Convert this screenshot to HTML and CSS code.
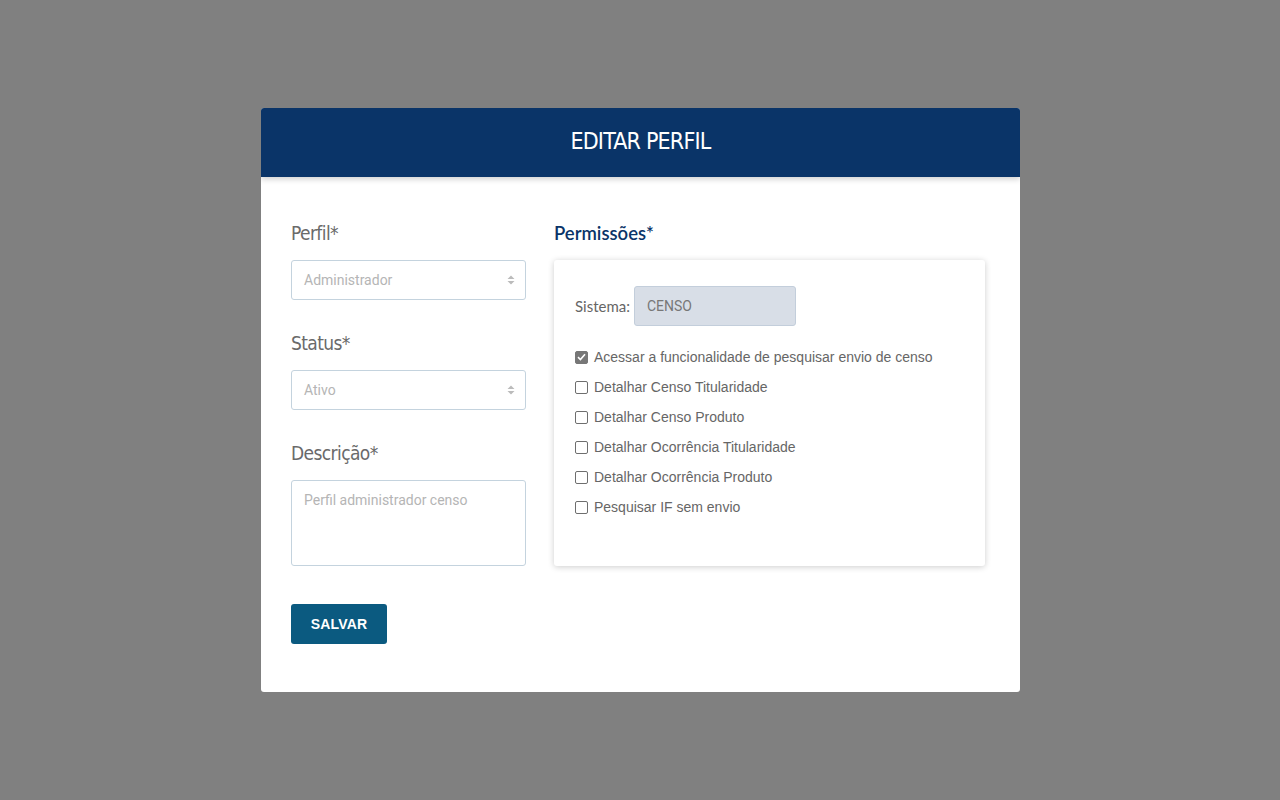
FILE: index.html
```html
<!DOCTYPE html>
<html lang="pt">
<head>
  <meta charset="UTF-8">
  <meta name="viewport" content="width=device-width, initial-scale=1.0">
  <title>Editar Perfil</title>
  <link rel="stylesheet" href="styles.css">
</head>
<body>
  <div class="card">
    <div class="card-header">
      <h1>EDITAR PERFIL</h1>
    </div>
    <div class="card-body">
      <div class="columns">
        <div class="col-left">
          <label class="field-label">Perfil*</label>
          <div class="select-box">
            <span class="placeholder">Administrador</span>
            <svg class="arrows" width="8" height="10" viewBox="0 0 8 10"><path d="M4 0.5 L7.5 4 L0.5 4 Z M4 9.5 L7.5 6 L0.5 6 Z" fill="#bbb"/></svg>
          </div>

          <label class="field-label spaced">Status*</label>
          <div class="select-box">
            <span class="placeholder">Ativo</span>
            <svg class="arrows" width="8" height="10" viewBox="0 0 8 10"><path d="M4 0.5 L7.5 4 L0.5 4 Z M4 9.5 L7.5 6 L0.5 6 Z" fill="#bbb"/></svg>
          </div>

          <label class="field-label spaced">Descrição*</label>
          <div class="text-box">
            <span class="placeholder">Perfil administrador censo</span>
          </div>
        </div>

        <div class="col-right">
          <label class="perm-label">Permissões*</label>
          <div class="perm-panel">
            <div class="sistema-row">
              <span class="sistema-label">Sistema:</span>
              <div class="sistema-input">CENSO</div>
            </div>
            <ul class="check-list">
              <li><span class="check checked"><svg width="9" height="8" viewBox="0 0 9 8"><path d="M1 4.2 L3.4 6.5 L8 1.2" stroke="#fff" stroke-width="1.6" fill="none"/></svg></span>Acessar a funcionalidade de pesquisar envio de censo</li>
              <li><span class="check"></span>Detalhar Censo Titularidade</li>
              <li><span class="check"></span>Detalhar Censo Produto</li>
              <li><span class="check"></span>Detalhar Ocorrência Titularidade</li>
              <li><span class="check"></span>Detalhar Ocorrência Produto</li>
              <li><span class="check"></span>Pesquisar IF sem envio</li>
            </ul>
          </div>
        </div>
      </div>
      <button class="btn-salvar">SALVAR</button>
    </div>
  </div>
</body>
</html>
```

FILE: styles.css
```css
* {
  box-sizing: border-box;
}

body {
  margin: 0;
  padding: 108px 0 0;
  background-color: #808080;
  font-family: "Liberation Sans", Arial, sans-serif;
  min-height: 800px;
}

.card {
  width: 759px;
  margin: 0 0 0 261px;
  background-color: #fff;
  border-radius: 3px;
  overflow: hidden;
}

.card-header {
  height: 69px;
  background-color: #0a3468;
  display: flex;
  align-items: center;
  justify-content: center;
  box-shadow: 0 2px 6px rgba(0, 0, 0, 0.2);
  position: relative;
}

.card-header h1 {
  margin: 0 0 4px;
  color: #fff;
  font-family: "DejaVu Sans", sans-serif;
  font-stretch: condensed;
  font-weight: 400;
  font-size: 23px;
  letter-spacing: -0.8px;
}

.card-body {
  padding: 44px 35px 48px 30px;
}

.columns {
  display: flex;
  gap: 28px;
}

.col-left {
  width: 235px;
  display: flex;
  flex-direction: column;
}

.col-right {
  flex: 1;
  display: flex;
  flex-direction: column;
}

.field-label {
  display: block;
  height: 24px;
  line-height: 24px;
  margin-bottom: 15px;
  font-family: "DejaVu Sans", sans-serif;
  font-stretch: condensed;
  font-size: 19px;
  letter-spacing: -0.6px;
  color: #6a6a6a;
}

.field-label.spaced {
  margin-top: 31px;
}

.select-box {
  height: 40px;
  border: 1px solid #c4d3de;
  border-radius: 3px;
  display: flex;
  align-items: center;
  justify-content: space-between;
  padding: 0 10px 0 12px;
}

.placeholder {
  font-family: Roboto, "Liberation Sans", sans-serif;
  font-size: 14px;
  color: #b5b5b5;
}

.text-box {
  height: 86px;
  border: 1px solid #c4d3de;
  border-radius: 3px;
  padding: 10px 12px;
}

.perm-label {
  display: block;
  height: 24px;
  line-height: 24px;
  margin-bottom: 15px;
  font-family: Lato, sans-serif;
  font-weight: 600;
  font-size: 18.5px;
  color: #0a3468;
}

.perm-panel {
  flex: 1;
  border-radius: 3px;
  box-shadow: 0 1px 6px rgba(0, 0, 0, 0.2);
  padding: 26px 21px 20px;
}

.sistema-row {
  display: flex;
  align-items: center;
  gap: 4px;
}

.sistema-label {
  font-family: Lato, sans-serif;
  font-size: 15px;
  color: #666;
}

.sistema-input {
  width: 162px;
  height: 40px;
  background-color: #d8dee7;
  border: 1px solid #c3cedb;
  border-radius: 3px;
  padding: 0 12px;
  line-height: 38px;
  font-family: Roboto, "Liberation Sans", sans-serif;
  font-size: 14px;
  color: #777;
}

.check-list {
  list-style: none;
  margin: 21px 0 0;
  padding: 0;
}

.check-list li {
  display: flex;
  align-items: center;
  height: 20px;
  margin-bottom: 10px;
  font-size: 14px;
  color: #666;
}

.check {
  width: 13px;
  height: 13px;
  border: 1.5px solid #6e6e6e;
  border-radius: 2px;
  margin-right: 6px;
  display: flex;
  align-items: center;
  justify-content: center;
}

.check.checked {
  background-color: #777;
  border-color: #777;
}

.btn-salvar {
  margin-top: 38px;
  width: 96px;
  height: 40px;
  background-color: #0b5a80;
  color: #fff;
  border: none;
  border-radius: 3px;
  font-family: "Liberation Sans", Arial, sans-serif;
  font-weight: 700;
  font-size: 14px;
  letter-spacing: 0.2px;
}
```
